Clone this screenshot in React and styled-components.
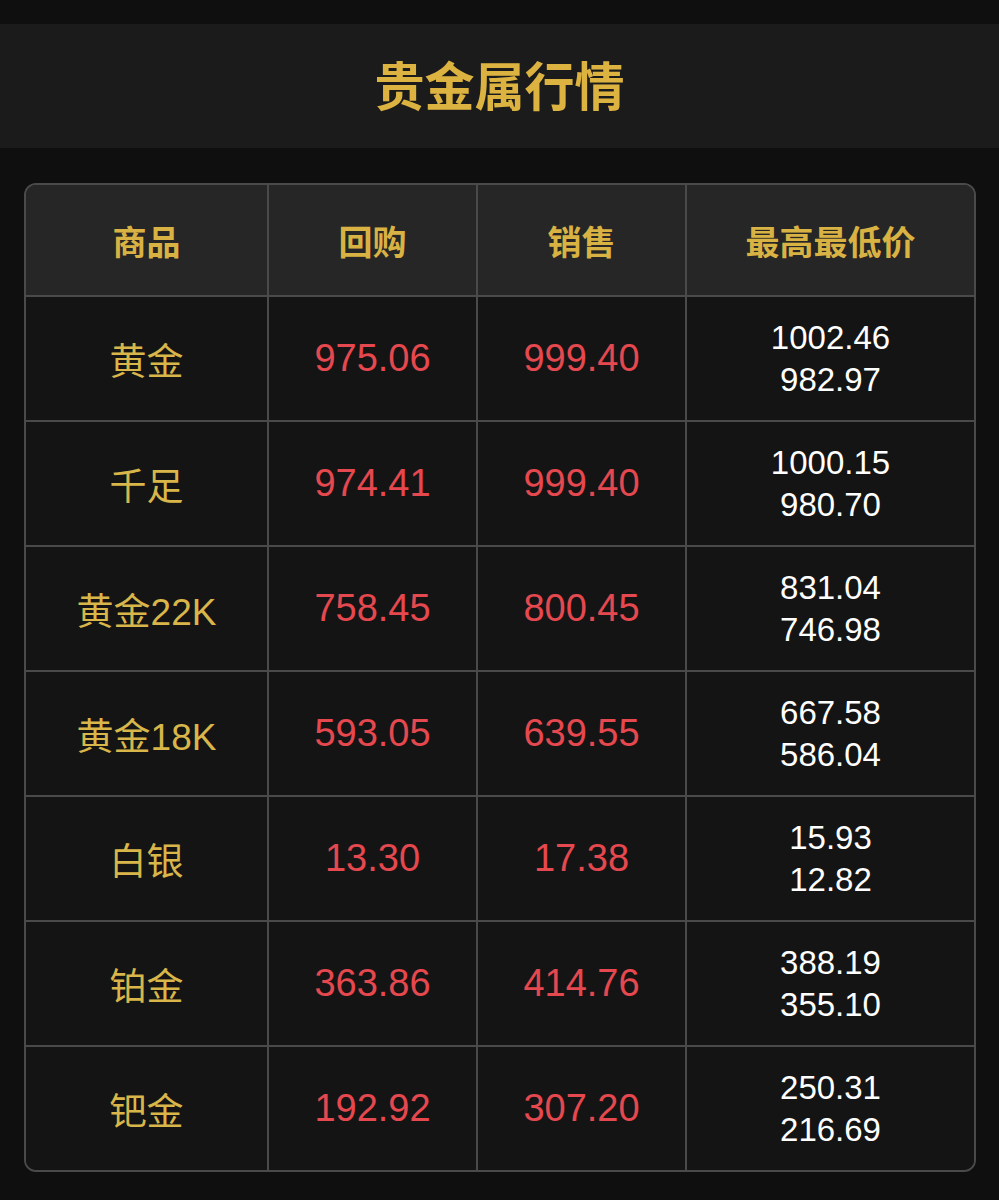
import React from "react";
import styled, { createGlobalStyle } from "styled-components";

const Global = createGlobalStyle`
  html, body { margin: 0; padding: 0; background: #0f0f0f; }
  body { font-family: "Liberation Sans", "Noto Sans CJK SC", sans-serif; }
`;

const Page = styled.div`
  width: 999px;
  min-height: 1200px;
  background: #0f0f0f;
  padding-top: 24px;
  box-sizing: border-box;
`;

const TitleBar = styled.header`
  height: 124px;
  background: #1b1b1b;
  display: flex;
  align-items: center;
  justify-content: center;
`;

const Title = styled.h1`
  margin: 0 0 6px;
  font-family: "Noto Sans CJK SC", sans-serif;
  font-weight: 700;
  font-size: 50px;
  line-height: 1.2;
  color: #dcb240;
  transform: scaleY(1.05);
`;

const Table = styled.div`
  margin: 35px 23px 0 24px;
  border: 2px solid #4a4a4a;
  border-radius: 12px;
  overflow: hidden;
  display: grid;
  grid-template-columns: 243px 209px 209px 1fr;
  background: #141414;
`;

const Cell = styled.div`
  box-sizing: border-box;
  height: ${(p) => (p.$head ? 112 : p.$bottom ? 123 : 125)}px;
  background: ${(p) => (p.$head ? "#262626" : "#141414")};
  border-right: ${(p) => (p.$last ? "none" : "2px solid #4a4a4a")};
  border-bottom: ${(p) => (p.$bottom ? "none" : "2px solid #4a4a4a")};
  display: flex;
  flex-direction: column;
  align-items: center;
  justify-content: center;
`;

const HeadText = styled.span`
  font-family: "Noto Sans CJK SC", sans-serif;
  font-weight: 700;
  font-size: 34px;
  color: #d9b244;
`;

const Name = styled.span`
  font-family: "Liberation Sans", "Noto Sans CJK SC", sans-serif;
  font-size: 37px;
  color: #d9b64a;
`;

const Price = styled.span`
  font-family: "Liberation Sans", sans-serif;
  font-size: 38px;
  color: #e5484f;
`;

const Range = styled.span`
  font-family: "Liberation Sans", sans-serif;
  font-size: 33px;
  line-height: 42px;
  color: #ffffff;
`;

const heads = ["商品", "回购", "销售", "最高最低价"];

const rows = [
  ["黄金", "975.06", "999.40", "1002.46", "982.97"],
  ["千足", "974.41", "999.40", "1000.15", "980.70"],
  ["黄金22K", "758.45", "800.45", "831.04", "746.98"],
  ["黄金18K", "593.05", "639.55", "667.58", "586.04"],
  ["白银", "13.30", "17.38", "15.93", "12.82"],
  ["铂金", "363.86", "414.76", "388.19", "355.10"],
  ["钯金", "192.92", "307.20", "250.31", "216.69"],
];

export default function App() {
  return (
    <Page>
      <Global />
      <TitleBar>
        <Title>贵金属行情</Title>
      </TitleBar>
      <Table>
        {heads.map((h, i) => (
          <Cell key={h} $head $last={i === 3}>
            <HeadText>{h}</HeadText>
          </Cell>
        ))}
        {rows.map((r, ri) => {
          const bottom = ri === rows.length - 1;
          return (
            <React.Fragment key={r[0]}>
              <Cell $bottom={bottom}>
                <Name>{r[0]}</Name>
              </Cell>
              <Cell $bottom={bottom}>
                <Price>{r[1]}</Price>
              </Cell>
              <Cell $bottom={bottom}>
                <Price>{r[2]}</Price>
              </Cell>
              <Cell $bottom={bottom} $last>
                <Range>{r[3]}</Range>
                <Range>{r[4]}</Range>
              </Cell>
            </React.Fragment>
          );
        })}
      </Table>
    </Page>
  );
}
